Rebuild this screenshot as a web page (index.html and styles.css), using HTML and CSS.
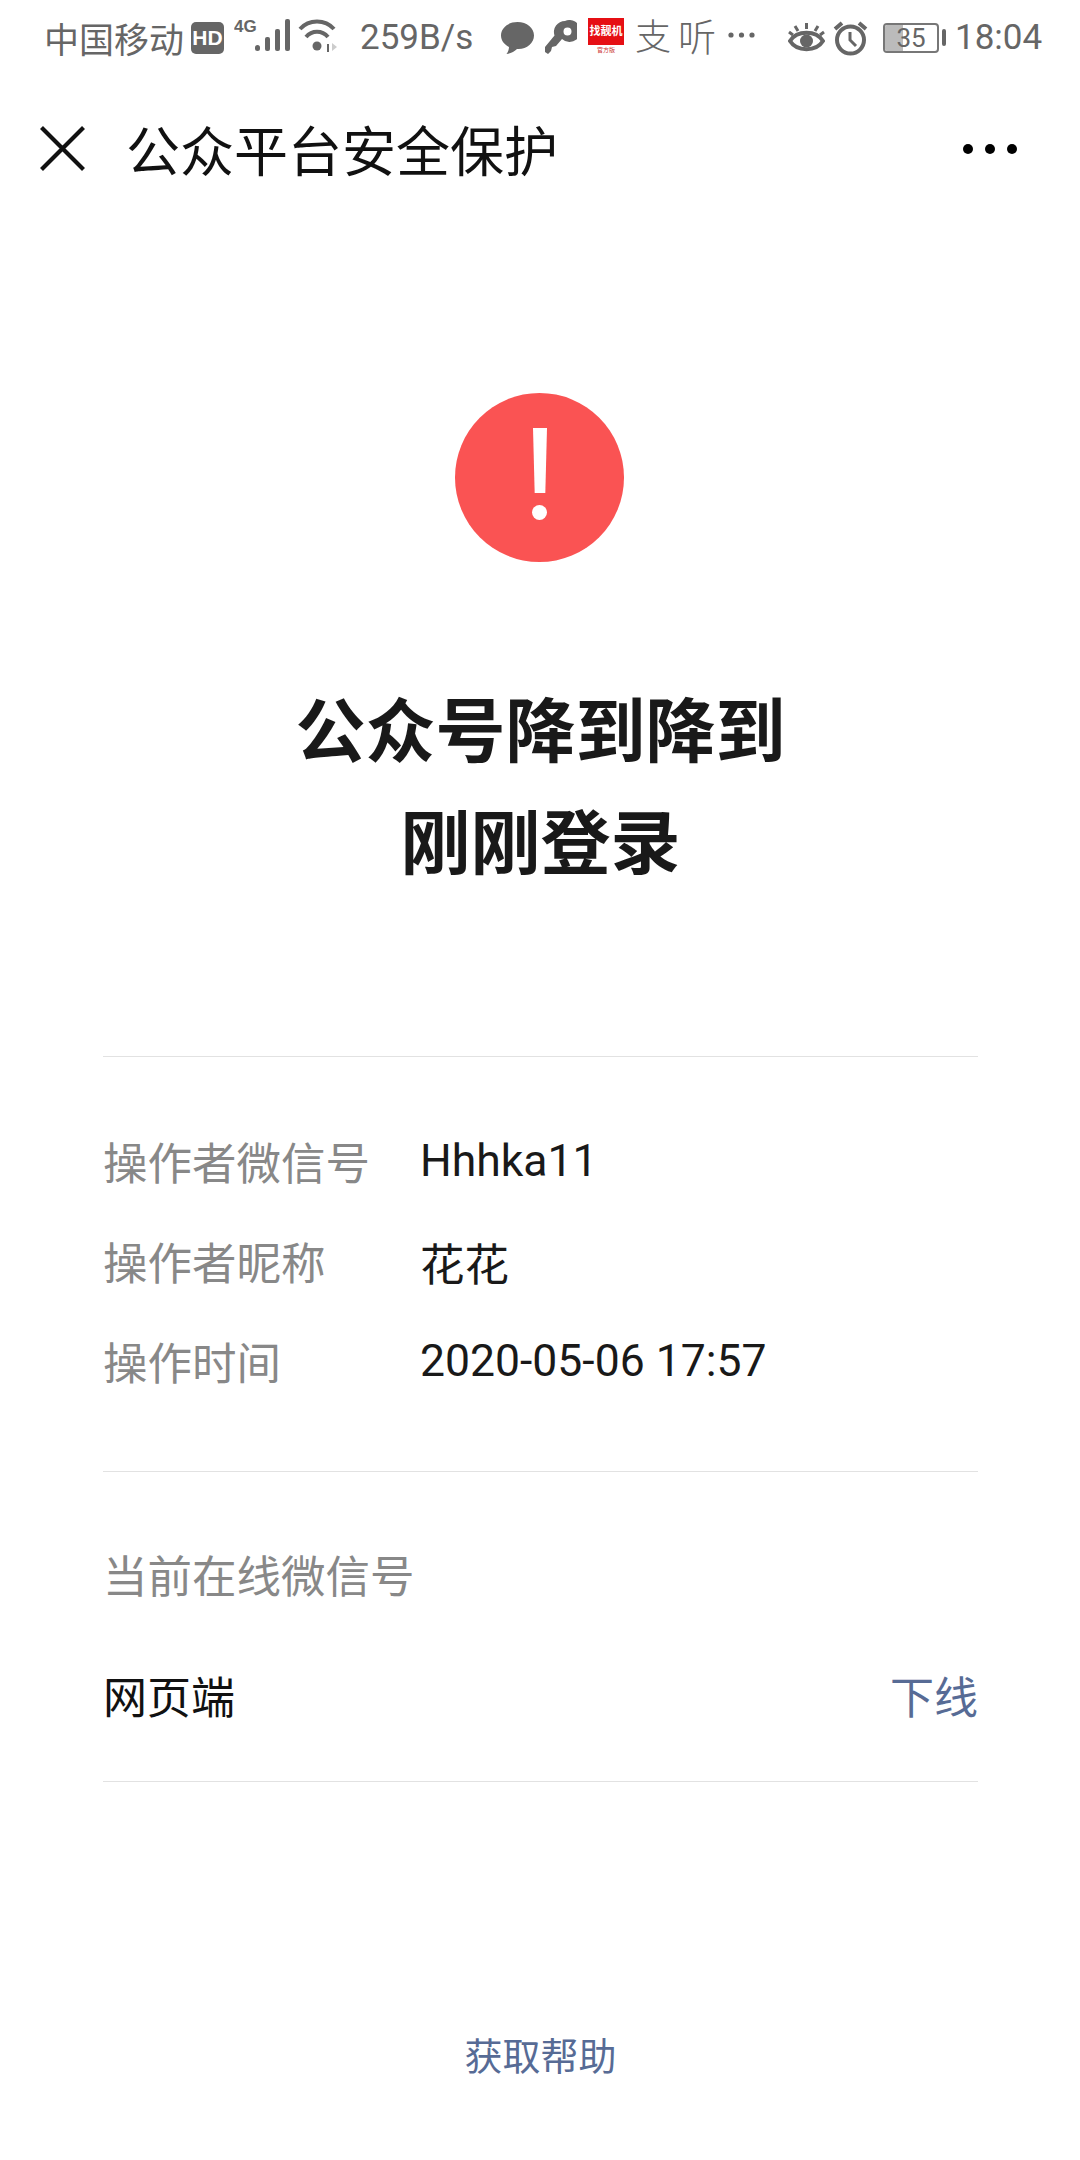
FILE: index.html
```html
<!DOCTYPE html>
<html lang="zh-CN">
<head>
    <meta charset="UTF-8">
    <meta name="viewport" content="width=device-width, initial-scale=1.0">
    <title>公众平台安全保护</title>
    <link rel="stylesheet" href="styles.css">
</head>
<body>

    <!-- status bar -->
    <div class="status-bar">
        <span class="carrier">中国移动</span>
        <svg class="ic-hd" width="33" height="32" viewBox="0 0 33 32"><rect width="33" height="32" rx="5" fill="#666"/><text x="16.500" y="23" text-anchor="middle" class="hd-text">HD</text></svg>
        <svg class="ic-signal" width="58" height="34" viewBox="0 0 58 34">
            <text x="0" y="14" class="net-text">4G</text>
            <g fill="#666">
                <rect x="21" y="27" width="5" height="6" rx="2.500"/>
                <rect x="31" y="19" width="5" height="14" rx="2"/>
                <rect x="41" y="11" width="5" height="22" rx="2"/>
                <rect x="51" y="1" width="5" height="32" rx="2"/>
            </g>
        </svg>
        <svg class="ic-wifi" width="40" height="34" viewBox="0 0 40 34" fill="none" stroke="#666" stroke-width="4">
            <path d="M2 10C11 0 27 0 36 10"/>
            <path d="M8 18C14 11 24 11 30 18"/>
            <circle cx="19" cy="27" r="4.500" fill="#666" stroke="none"/>
            <path d="M30 25v8" stroke-width="2"/>
            <path d="M34 24l5 4-5 4z" fill="#ccc" stroke="none"/>
        </svg>
        <span class="speed">259B/s</span>
        <svg class="ic-chat" width="35" height="34" viewBox="0 0 35 34"><path d="M17.500 1C8 1 1 7 1 14.500c0 5 3.200 9 8 11.500 0 2.500-1 5-2.500 7 4-.5 8-2.500 10.500-5 .5 0 1 0 1.500 0C27 28 34 22 34 14.500S27 1 17.500 1z" fill="#666"/></svg>
        <svg class="ic-key" width="33" height="36" viewBox="0 0 33 36"><path d="M21 1a11 11 0 0 0-10.500 14.500L1 27v5l3 2 3-3 1-4 4-1 6-7A11 11 0 1 0 21 1zm2.500 6.500a4 4 0 1 1 0 8 4 4 0 0 1 0-8z" fill="#666" fill-rule="evenodd"/></svg>
        <div class="ic-app">
            <span class="app-name">找靓机</span>
            <span class="app-sub">官方版</span>
        </div>
        <span class="glyph-zhi">支</span>
        <span class="glyph-ting">听</span>
        <svg class="ic-more" width="27" height="6" viewBox="0 0 27 6" fill="#666"><circle cx="3" cy="3" r="2.600"/><circle cx="13.500" cy="3" r="2.600"/><circle cx="24" cy="3" r="2.600"/></svg>
        <svg class="ic-eye" width="37" height="32" viewBox="0 0 37 32" fill="none" stroke="#666" stroke-width="4">
            <path d="M2 19C9 8 28 8 35 19 28 30 9 30 2 19z"/>
            <circle cx="18.500" cy="19" r="6.500" fill="#666" stroke="none"/>
            <path d="M18.500 1v6M7 4l3 5M30 4l-3 5M1 10l4 3M36 10l-4 3" stroke-width="3"/>
        </svg>
        <svg class="ic-clock" width="35" height="36" viewBox="0 0 35 36" fill="none" stroke="#666" stroke-width="4">
            <circle cx="17.500" cy="20" r="13.500"/>
            <path d="M17 12v8l6 6" stroke-width="3"/>
            <path d="M2 9l7-6M33 9l-7-6"/>
        </svg>
        <div class="battery">
            <div class="battery-body"><div class="battery-fill" style="width: 35%"></div><span class="battery-num">35</span></div>
            <div class="battery-nub"></div>
        </div>
        <span class="clock">18:04</span>
    </div>

    <!-- title bar -->
    <div class="nav-bar">
        <svg class="nav-close" width="45" height="45" viewBox="0 0 45 45" fill="none" stroke="#111" stroke-width="4.200"><path d="M1.500 1.500l42 42M43.500 1.500l-42 42"/></svg>
        <span class="nav-title">公众平台安全保护</span>
        <div class="nav-dots"><i></i><i></i><i></i></div>
    </div>

    <div class="page">
        <div class="warn-icon">
            <div class="warn-bar"></div>
            <div class="warn-dot"></div>
        </div>

        <h1 class="headline">公众号降到降到<br>刚刚登录</h1>

        <div class="info">
            <div class="info-row"><span class="info-label">操作者微信号</span><span class="info-value">Hhhka11</span></div>
            <div class="info-row"><span class="info-label">操作者昵称</span><span class="info-value">花花</span></div>
            <div class="info-row"><span class="info-label">操作时间</span><span class="info-value">2020-05-06 17:57</span></div>
        </div>

        <div class="online">
            <div class="online-title">当前在线微信号</div>
            <div class="online-row">
                <span>网页端</span>
                <a class="link offline">下线</a>
            </div>
        </div>

        <a class="link help">获取帮助</a>
    </div>

</body>
</html>
```

FILE: styles.css
```css
* {
    box-sizing: border-box;
}

body {
    margin: 0;
    height: 2160px;
    overflow: hidden;
    background: #fff;
    color: #111;
    font-family: Roboto, "Noto Sans CJK SC", sans-serif;
}

/* status bar */
.status-bar {
    height: 75px;
    padding-left: 44px;
    display: flex;
    align-items: center;
    color: #666;
    font-size: 35px;
    white-space: nowrap;
}

.carrier {
    width: 139px;
}

.ic-hd {
    margin-left: 8px;
}

.hd-text {
    font-family: "Liberation Sans", sans-serif;
    font-size: 21px;
    font-weight: 700;
    fill: #fff;
}

.ic-signal {
    margin-left: 10px;
    margin-top: -6px;
}

.net-text {
    font-family: "Liberation Sans", sans-serif;
    font-size: 17px;
    font-weight: 700;
    fill: #666;
}

.ic-wifi {
    margin-left: 6px;
    margin-top: -4px;
}

.speed {
    margin-left: 22px;
    width: 114px;
}

.ic-chat {
    margin-left: 26px;
}

.ic-key {
    margin-left: 9px;
}

.ic-app {
    margin-left: 11px;
    width: 36px;
    height: 36px;
    margin-top: -4px;
    background: linear-gradient(#e60f14 27px, #fff 27px);
    color: #fff;
    display: flex;
    flex-direction: column;
    align-items: center;
}

.app-name {
    font-size: 11px;
    line-height: 27px;
    font-weight: 700;
}

.app-sub {
    font-size: 6px;
    line-height: 9px;
    color: #c33;
}

.glyph-zhi {
    margin-left: 11px;
    width: 36px;
    font-size: 36px;
    line-height: 36px;
    font-weight: 300;
}

.glyph-ting {
    margin-left: 7px;
    width: 38px;
    font-size: 38px;
    line-height: 38px;
    font-weight: 300;
}

.ic-more {
    margin-left: 12px;
    margin-top: -6px;
}

.ic-eye {
    margin-left: 33px;
}

.ic-clock {
    margin-left: 8px;
}

.battery {
    margin-left: 15px;
    display: flex;
    align-items: center;
    gap: 3px;
}

.battery-body {
    position: relative;
    width: 56px;
    height: 30px;
    border: 2px solid #777;
    border-radius: 4px;
    overflow: hidden;
}

.battery-fill {
    height: 100%;
    background: #bbb;
}

.battery-num {
    position: absolute;
    left: 0;
    right: 0;
    top: -1px;
    text-align: center;
    font-size: 26px;
    line-height: 28px;
}

.battery-nub {
    width: 4px;
    height: 17px;
    background: #666;
    border-radius: 2px;
}

.clock {
    margin-left: 9px;
}

/* title bar */
.nav-bar {
    height: 147px;
    padding: 0 63px 0 40px;
    display: flex;
    align-items: center;
}

.nav-title {
    margin-left: 41px;
    font-size: 54px;
    color: #111;
}

.nav-dots {
    margin-left: auto;
    display: flex;
    gap: 12px;
}

.nav-dots i {
    width: 10px;
    height: 10px;
    border-radius: 50%;
    background: #000;
}

/* content */
.page {
    padding: 171px 102px 0 103px;
}

.warn-icon {
    position: relative;
    width: 169px;
    height: 169px;
    margin-left: 352px;
    border-radius: 50%;
    background: #fa5353;
}

.warn-bar {
    position: absolute;
    top: 35px;
    left: 78px;
    width: 14px;
    height: 65px;
    background: #fff;
    clip-path: polygon(0 0, 100% 0, 88% 100%, 12% 100%);
}

.warn-dot {
    position: absolute;
    top: 112px;
    left: 77px;
    width: 15px;
    height: 15px;
    border-radius: 50%;
    background: #fff;
}

.headline {
    margin: 115px 0 0;
    text-align: center;
    font-size: 70px;
    line-height: 112px;
    font-weight: 700;
    color: #191919;
}

.info {
    margin-top: 155px;
    padding: 54px 0 60px;
    border-top: 1px solid #e2e2e2;
    border-bottom: 1px solid #e2e2e2;
}

.info-row {
    height: 100px;
    display: flex;
    align-items: center;
    font-size: 44.500px;
}

.info-label {
    width: 317px;
    padding-bottom: 2px;
    color: #888;
}

.info-value {
    color: #191919;
}

.online {
    padding: 76px 0 52px;
    border-bottom: 1px solid #e2e2e2;
    font-size: 44px;
}

.online-title {
    font-size: 44.500px;
    line-height: 60px;
    color: #888;
}

.online-row {
    margin-top: 61px;
    line-height: 60px;
    display: flex;
    justify-content: space-between;
}

.link {
    color: #576b95;
}

.help {
    display: block;
    margin-top: 245px;
    text-align: center;
    font-size: 38px;
    line-height: 60px;
}
```
